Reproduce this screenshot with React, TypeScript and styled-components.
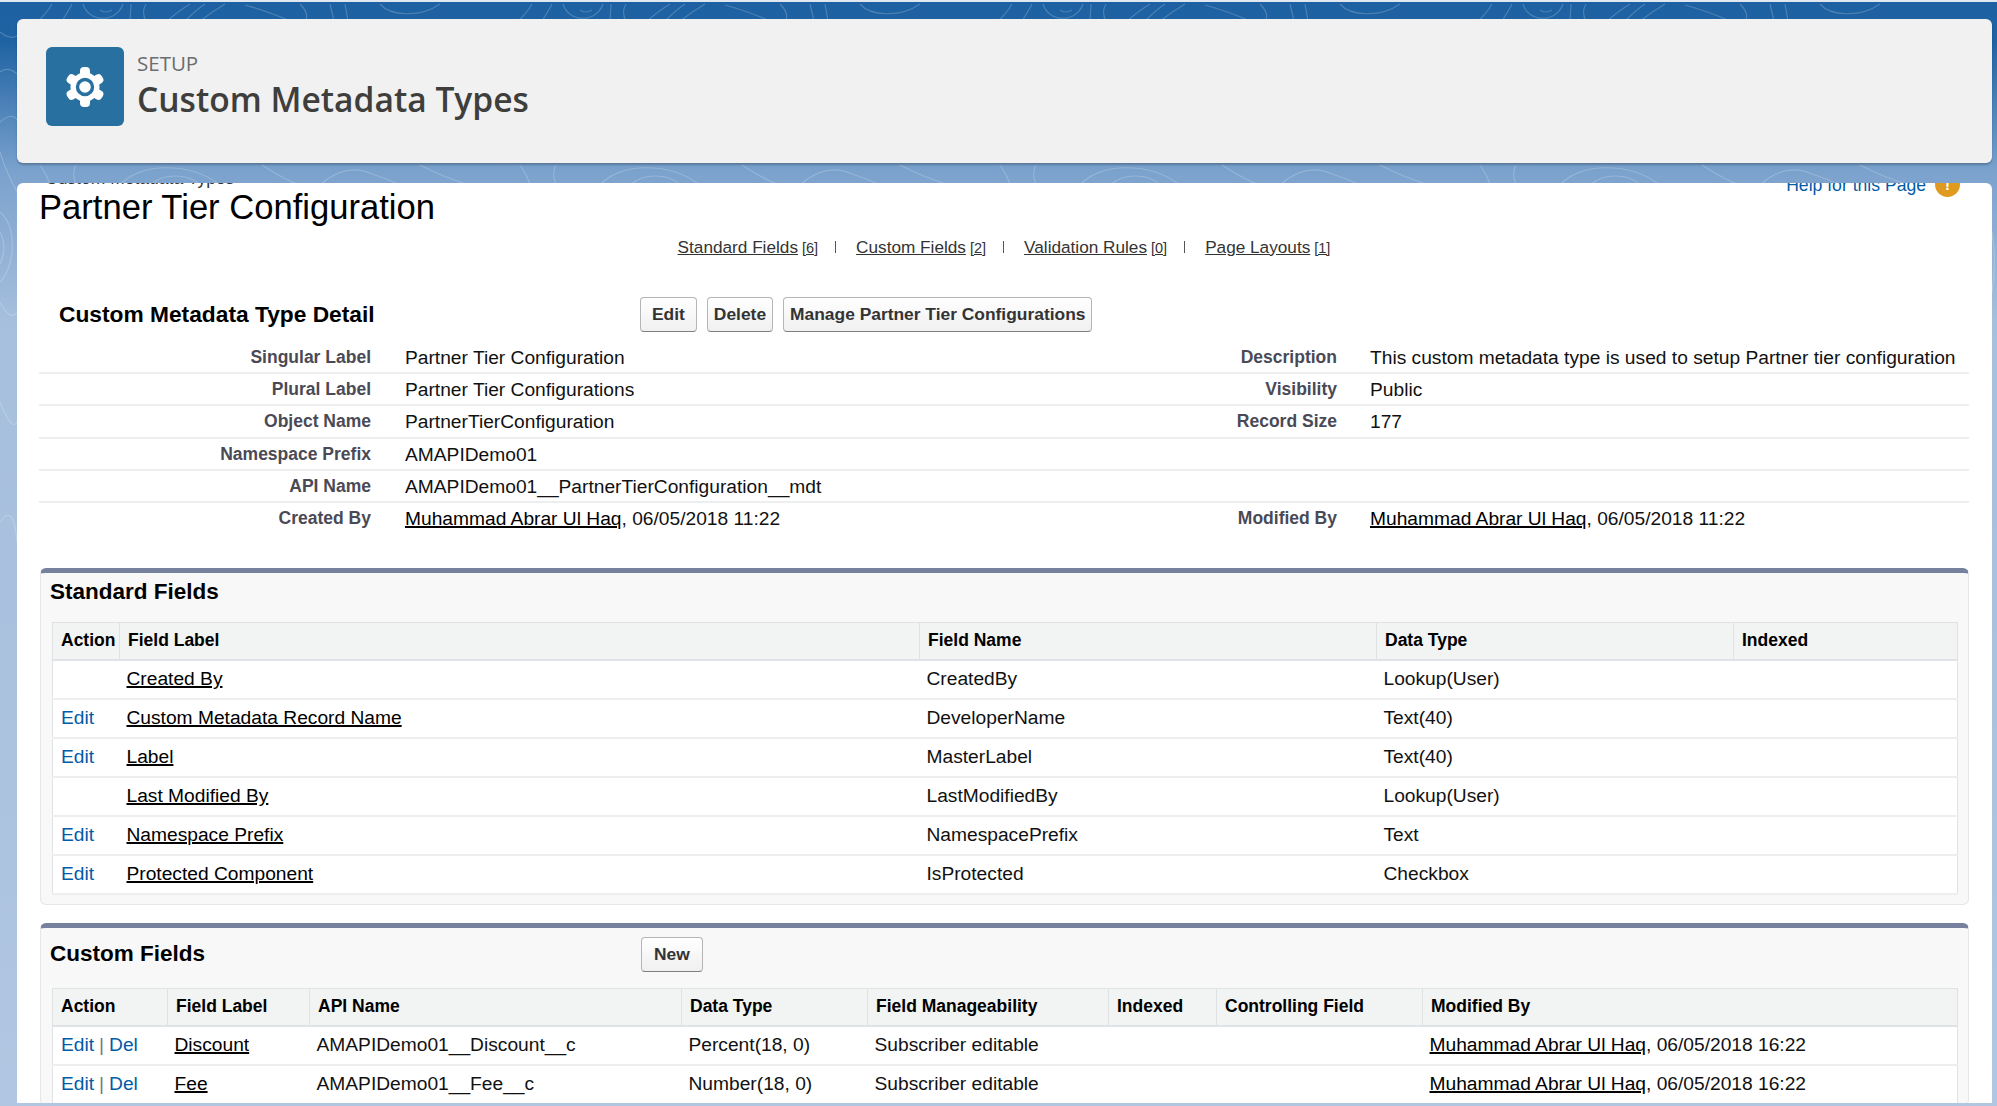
import { Fragment } from "react"
import styled, { createGlobalStyle } from "styled-components"

const GlobalStyle = createGlobalStyle`
    html, body {
        margin: 0;
        padding: 0;
        background: #b0c6e1;
    }
    * {
        box-sizing: border-box;
    }
`

const Page = styled.div`
    position: relative;
    width: 1997px;
    height: 1106px;
    overflow: hidden;
    display: flex;
    flex-direction: column;
    gap: 20px;
    padding: 19px 5px 3px 17px;
    border-top: 2px solid #dfe7f0;
    font-family: "Liberation Sans", Arial, sans-serif;
    color: #111;
    background: linear-gradient(180deg, #1d61a2 0, #1f63a3 40px, #7ba2cd 170px, #a6bfdd 320px, #b0c6e1 100%);
`

const Contours = styled.svg`
    position: absolute;
    inset: 0;
    width: 1997px;
    height: 1106px;
    fill: none;
    stroke: #fff;
    stroke-opacity: 0.2;
    stroke-width: 1.2;
`

const HeaderCard = styled.header`
    position: relative;
    flex: 0 0 144px;
    margin-top: -2px;
    display: flex;
    align-items: flex-start;
    gap: 13px;
    padding: 28px 29px;
    background: #f1f1f1;
    border-radius: 6px;
    box-shadow: 0 2px 2px rgba(0, 0, 0, 0.22);
`

const IconTile = styled.div`
    width: 78px;
    height: 79px;
    background: #27709f;
    border-radius: 6px;
    display: flex;
    align-items: center;
    justify-content: center;
`

const HeaderText = styled.div`
    display: flex;
    flex-direction: column;
    font-family: "Open Sans", sans-serif;
`

const Eyebrow = styled.div`
    font-size: 20.5px;
    line-height: 24px;
    margin-top: 4px;
    color: #6b6d70;
`

const PageName = styled.h1`
    margin: 4px 0 0;
    font-size: 33.6px;
    line-height: 40px;
    font-weight: 600;
    color: #3e3e3c;
`

const Body = styled.main`
    position: relative;
    flex: 1 1 auto;
    min-height: 0;
    overflow: hidden;
    padding: 0 23px 0 22px;
    background: #fff;
    border-radius: 6px 6px 0 0;
`

const TitleRow = styled.div`
    display: flex;
    justify-content: space-between;
    align-items: flex-start;
`

const Crumb = styled.div`
    margin: -14px 0 0 6px;
    height: 18px;
    font-size: 17.5px;
    line-height: 18px;
    color: #333;
`

const RecordTitle = styled.h2`
    margin: 0;
    font-size: 34.6px;
    line-height: 40px;
    font-weight: 400;
    color: #000;
`

const Help = styled.a`
    display: flex;
    align-items: center;
    gap: 9px;
    margin: -11px 9px 0 0;
    font-size: 17.6px;
    line-height: 24px;
    color: #015ba7;
`

const HelpDot = styled.span`
    width: 25px;
    height: 25px;
    border-radius: 50%;
    background: #e09a1f;
    color: #fff;
    display: flex;
    align-items: center;
    justify-content: center;
    font-size: 15px;
    font-weight: 700;
`

const JumpLinks = styled.nav`
    display: flex;
    justify-content: center;
    align-items: center;
    height: 22px;
    margin-top: 9px;
    font-size: 17.2px;
    color: #333;
`

const JumpLink = styled.span`
    a {
        color: #333;
        text-decoration: underline;
    }
    small {
        font-size: 14.5px;
        text-decoration: underline;
        margin-left: 4px;
    }
`

const JumpSep = styled.i`
    display: inline-block;
    width: 1px;
    height: 12px;
    margin: 0 20px 0 17px;
    background: #555;
`

const SectionHead = styled.div`
    display: flex;
    align-items: center;
    margin-top: 39px;
`

const PanelHead = styled.div<{ $height: number; $textHeight: number }>`
    display: flex;
    height: ${p => p.$height}px;
    margin-left: -11px;
    line-height: ${p => p.$textHeight}px;
`

const SectionName = styled.div<{ $left: number; $width: number; $size: number }>`
    flex: 0 0 ${p => p.$width}px;
    padding-left: ${p => p.$left}px;
    font-size: ${p => p.$size}px;
    font-weight: 700;
    color: #000;
`

const Buttons = styled.div<{ $top?: number }>`
    display: flex;
    gap: 10px;
    margin-top: ${p => p.$top ?? 0}px;
`

const Btn = styled.button<{ $pad?: number }>`
    height: 35px;
    padding: 0 ${p => p.$pad ?? 6}px;
    font-family: "Liberation Sans", Arial, sans-serif;
    font-size: 17.4px;
    line-height: 33px;
    font-weight: 700;
    color: #333;
    border: 1px solid #b5b5b5;
    border-bottom-color: #7f7f7f;
    border-radius: 4px;
    background: linear-gradient(180deg, #fff, #f0f0f0);
`

const DetailGrid = styled.div`
    display: grid;
    grid-template-columns: 332px 700px 266px 1fr;
    margin-top: 10px;
`

const DetailLabel = styled.div<{ $last?: boolean }>`
    height: 32.2px;
    line-height: 30px;
    text-align: right;
    font-size: 17.5px;
    font-weight: 700;
    white-space: nowrap;
    color: #4a4a56;
    border-bottom: ${p => (p.$last ? "none" : "2px solid #eceeef")};
`

const DetailValue = styled.div<{ $last?: boolean; $pad?: number }>`
    height: 32.2px;
    line-height: 32px;
    padding-left: ${p => p.$pad ?? 0}px;
    font-size: 19.2px;
    color: #111;
    white-space: nowrap;
    border-bottom: ${p => (p.$last ? "none" : "2px solid #eceeef")};

    a {
        color: #000;
        text-decoration: underline;
        text-decoration-thickness: 1.5px;
    }
`

const Panel = styled.section<{ $top: number; $height?: number }>`
    margin: ${p => p.$top}px 0 0 1px;
    height: ${p => (p.$height ? `${p.$height}px` : "auto")};
    padding: 0 11px;
    background: #f8f8f8;
    border: 1px solid #e6e6e6;
    border-top: 5px solid #76829d;
    border-radius: 6px;
`

const Table = styled.table`
    width: 100%;
    table-layout: fixed;
    border-collapse: collapse;
    background: #fff;
    border: 1px solid #e0e3e5;
`

const Col = styled.col<{ $w: number }>`
    width: ${p => p.$w}px;
`

const Th = styled.th`
    height: 37px;
    padding: 0 0 0 8px;
    text-align: left;
    font-size: 17.5px;
    font-weight: 700;
    color: #000;
    background: #f2f3f3;
    border-right: 1px solid #e0e3e5;
    border-bottom: 2px solid #e0e3e5;
`

const Td = styled.td`
    height: 39px;
    padding: 0 0 0 7px;
    font-size: 19.2px;
    color: #111;
    white-space: nowrap;
    border-bottom: 2px solid #eceeef;

    a {
        color: #000;
        text-decoration: underline;
        text-decoration-thickness: 1.5px;
    }
`

const ActionCell = styled(Td)`
    padding-left: 8px;

    a {
        color: #015ba7;
        text-decoration: none;
    }
`

const ActionSep = styled.span`
    margin: 0 5px;
    color: #777;
`

const Gear = () => (
    <svg width="40" height="42" viewBox="-20 -21 40 42">
        {[0, 60, 120, 180, 240, 300].map(a => (
            <rect key={a} x="-5" y="-20" width="10" height="14" rx="4" fill="#fff" transform={`rotate(${a})`} />
        ))}
        <circle r="14.5" fill="#fff" />
        <circle r="7.5" fill="none" stroke="#27709f" strokeWidth="3.4" />
    </svg>
)

const Contour = () => (
    <Contours viewBox="0 0 1997 1106">
        {[0, 480, 960, 1440].map(x => (
            <g key={x} transform={`translate(${x} 0)`}>
                <path d="M52 2 Q46 12 38 19" />
                <path d="M72 2 Q68 10 62 19" />
                <path d="M83 2 C88 20 116 22 123 2" />
                <path d="M100 8 Q106 12 112 8" />
                <path d="M131 2 L130 19" />
                <path d="M146 2 Q141 10 146 19" />
                <path d="M167 19 Q180 8 190 2" />
                <path d="M185 19 Q196 8 205 2" />
                <path d="M200 19 Q212 10 225 2" />
                <path d="M245 3 Q270 10 290 19" />
                <path d="M300 2 Q310 12 305 19" />
                <path d="M330 2 L334 19 M345 2 L348 19" />
                <path d="M380 2 C390 14 420 16 440 2" />
                <path d="M40 163 Q48 175 50 183" />
                <path d="M76 163 C72 170 74 178 76 183" />
                <path d="M120 183 C140 160 190 160 220 183" />
                <path d="M150 183 C165 170 190 172 200 183" />
                <path d="M262 163 Q285 178 300 183" />
                <path d="M320 183 Q345 160 372 172 Q390 178 400 183" />
                <path d="M420 163 Q445 176 470 183" />
            </g>
        ))}
        <path d="M0 30 Q10 38 17 34 M0 70 Q8 64 17 72 M0 120 Q12 110 17 118 M0 150 Q6 170 17 190" />
        <path d="M0 210 Q14 222 12 250 Q10 270 0 280 M0 230 Q8 245 0 262 M0 300 Q10 320 17 310" />
        <path d="M0 400 Q12 430 17 420 M0 520 Q14 500 17 540 M1992 230 Q1997 260 1992 290" />
    </Contours>
)

const standardRows = [
    { edit: false, label: "Created By", cells: ["CreatedBy", "Lookup(User)", ""] },
    { edit: true, label: "Custom Metadata Record Name", cells: ["DeveloperName", "Text(40)", ""] },
    { edit: true, label: "Label", cells: ["MasterLabel", "Text(40)", ""] },
    { edit: false, label: "Last Modified By", cells: ["LastModifiedBy", "Lookup(User)", ""] },
    { edit: true, label: "Namespace Prefix", cells: ["NamespacePrefix", "Text", ""] },
    { edit: true, label: "Protected Component", cells: ["IsProtected", "Checkbox", ""] },
]

const customRows = [
    { label: "Discount", api: "AMAPIDemo01__Discount__c", type: "Percent(18, 0)" },
    { label: "Fee", api: "AMAPIDemo01__Fee__c", type: "Number(18, 0)" },
]

const details = [
    ["Singular Label", "Partner Tier Configuration", "Description", "This custom metadata type is used to setup Partner tier configuration"],
    ["Plural Label", "Partner Tier Configurations", "Visibility", "Public"],
    ["Object Name", "PartnerTierConfiguration", "Record Size", "177"],
    ["Namespace Prefix", "AMAPIDemo01", "", ""],
    ["API Name", "AMAPIDemo01__PartnerTierConfiguration__mdt", "", ""],
]

const jumps = [
    ["Standard Fields", "[6]"],
    ["Custom Fields", "[2]"],
    ["Validation Rules", "[0]"],
    ["Page Layouts", "[1]"],
]

export default function App() {
    return (
        <Page>
            <GlobalStyle />
            <Contour />
            <HeaderCard>
                <IconTile><Gear /></IconTile>
                <HeaderText>
                    <Eyebrow>SETUP</Eyebrow>
                    <PageName>Custom Metadata Types</PageName>
                </HeaderText>
            </HeaderCard>

            <Body>
                <TitleRow>
                    <div>
                        <Crumb>Custom Metadata Types</Crumb>
                        <RecordTitle>Partner Tier Configuration</RecordTitle>
                    </div>
                    <Help>Help for this Page <HelpDot>!</HelpDot></Help>
                </TitleRow>

                <JumpLinks>
                    {jumps.map(([name, count], i) => (
                        <JumpLink key={name}>
                            {i > 0 && <JumpSep />}
                            <a>{name}</a><small>{count}</small>
                        </JumpLink>
                    ))}
                </JumpLinks>

                <SectionHead>
                    <SectionName $left={20} $width={601} $size={22.75}>Custom Metadata Type Detail</SectionName>
                    <Buttons>
                        <Btn $pad={11}>Edit</Btn>
                        <Btn>Delete</Btn>
                        <Btn>Manage Partner Tier Configurations</Btn>
                    </Buttons>
                </SectionHead>

                <DetailGrid>
                    {details.map(d => (
                        <Fragment key={d[0]}>
                            <DetailLabel>{d[0]}</DetailLabel>
                            <DetailValue $pad={34}>{d[1]}</DetailValue>
                            <DetailLabel>{d[2]}</DetailLabel>
                            <DetailValue $pad={33}>{d[3]}</DetailValue>
                        </Fragment>
                    ))}
                    <DetailLabel $last>Created By</DetailLabel>
                    <DetailValue $last $pad={34}><a>Muhammad Abrar Ul Haq</a>, 06/05/2018 11:22</DetailValue>
                    <DetailLabel $last>Modified By</DetailLabel>
                    <DetailValue $last $pad={33}><a>Muhammad Abrar Ul Haq</a>, 06/05/2018 11:22</DetailValue>
                </DetailGrid>

                <Panel $top={33} $height={337}>
                    <PanelHead $height={49} $textHeight={37}>
                        <SectionName $left={9} $width={600} $size={22.5}>Standard Fields</SectionName>
                    </PanelHead>
                    <Table>
                        <colgroup>
                            <Col $w={67} /><Col $w={800} /><Col $w={457} /><Col $w={357} /><Col $w={224} />
                        </colgroup>
                        <thead>
                            <tr>
                                <Th>Action</Th><Th>Field Label</Th><Th>Field Name</Th><Th>Data Type</Th><Th>Indexed</Th>
                            </tr>
                        </thead>
                        <tbody>
                            {standardRows.map(r => (
                                <tr key={r.label}>
                                    <ActionCell>{r.edit && <a>Edit</a>}</ActionCell>
                                    <Td><a>{r.label}</a></Td>
                                    {r.cells.map((c, i) => <Td key={i}>{c}</Td>)}
                                </tr>
                            ))}
                        </tbody>
                    </Table>
                </Panel>

                <Panel $top={18}>
                    <PanelHead $height={60} $textHeight={52}>
                        <SectionName $left={9} $width={600} $size={22.5}>Custom Fields</SectionName>
                        <Buttons $top={9}><Btn $pad={12}>New</Btn></Buttons>
                    </PanelHead>
                    <Table>
                        <colgroup>
                            <Col $w={115} /><Col $w={142} /><Col $w={372} /><Col $w={186} /><Col $w={241} /><Col $w={108} /><Col $w={206} /><Col $w={535} />
                        </colgroup>
                        <thead>
                            <tr>
                                <Th>Action</Th><Th>Field Label</Th><Th>API Name</Th><Th>Data Type</Th><Th>Field Manageability</Th><Th>Indexed</Th><Th>Controlling Field</Th><Th>Modified By</Th>
                            </tr>
                        </thead>
                        <tbody>
                            {customRows.map(r => (
                                <tr key={r.label}>
                                    <ActionCell><a>Edit</a><ActionSep>|</ActionSep><a>Del</a></ActionCell>
                                    <Td><a>{r.label}</a></Td>
                                    <Td>{r.api}</Td>
                                    <Td>{r.type}</Td>
                                    <Td>Subscriber editable</Td>
                                    <Td></Td>
                                    <Td></Td>
                                    <Td><a>Muhammad Abrar Ul Haq</a>, 06/05/2018 16:22</Td>
                                </tr>
                            ))}
                        </tbody>
                    </Table>
                </Panel>
            </Body>
        </Page>
    )
}
